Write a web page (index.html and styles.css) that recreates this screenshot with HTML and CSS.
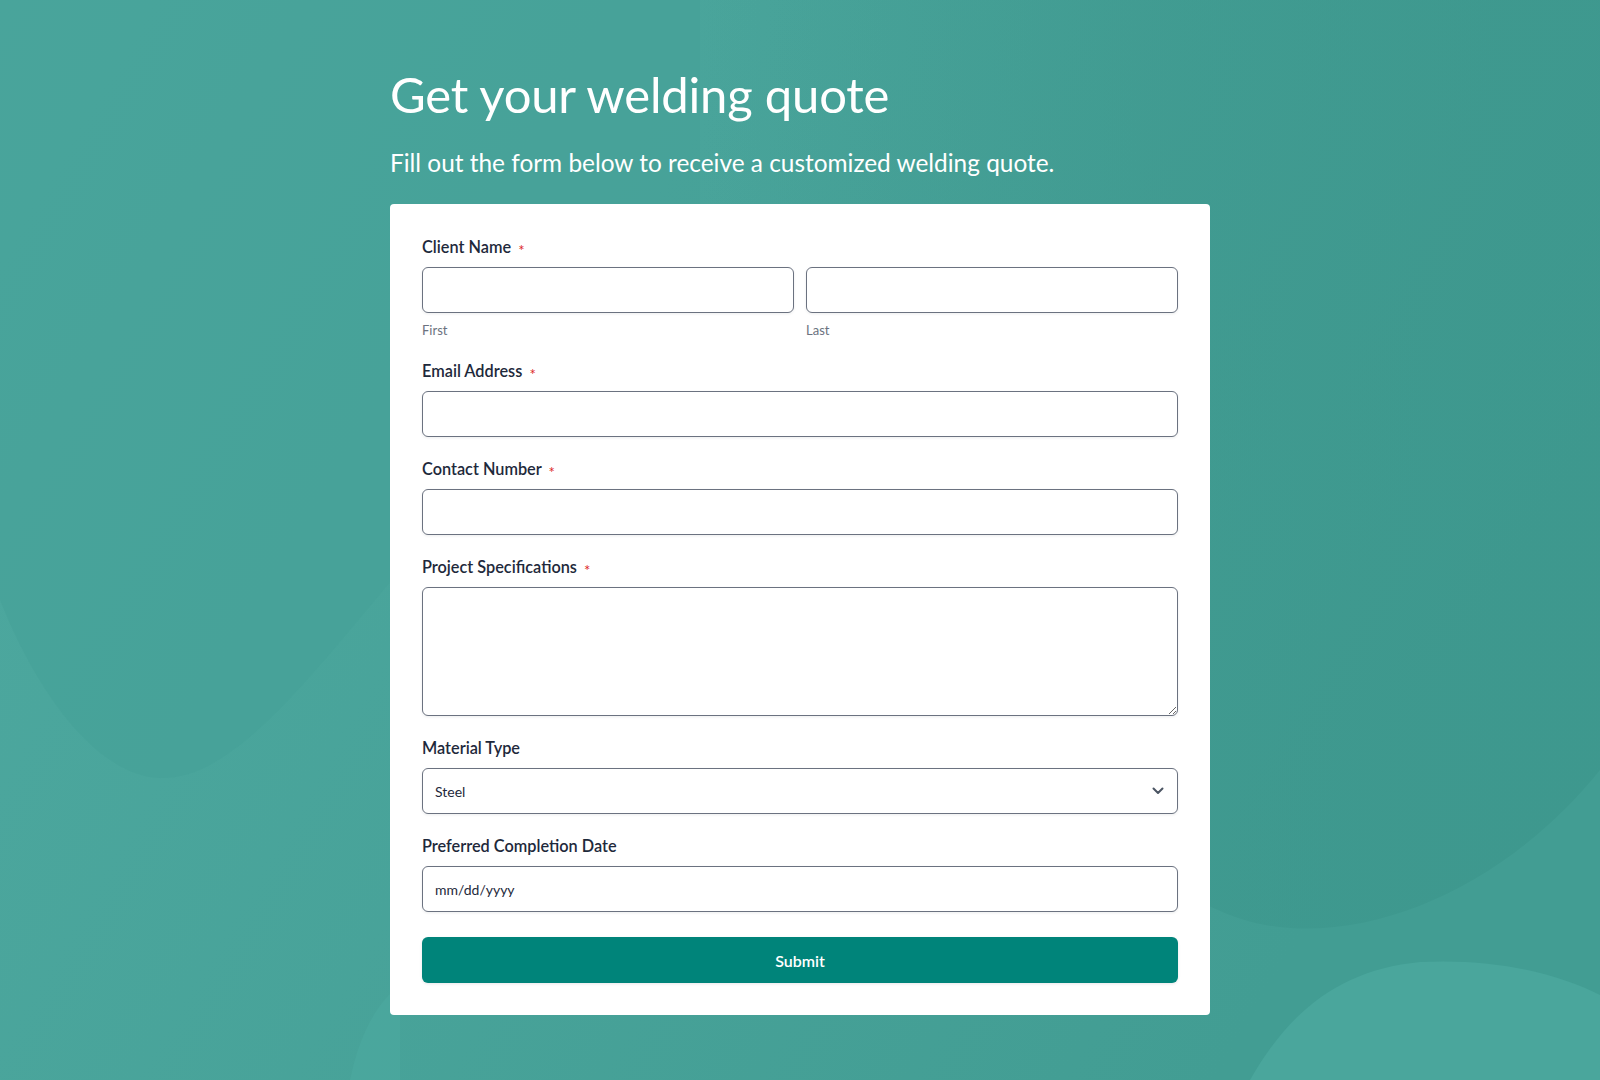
FILE: index.html
```html
<!DOCTYPE html>
<html lang="en">
<head>
<meta charset="utf-8">
<title>Get your welding quote</title>
<link rel="stylesheet" href="styles.css">
</head>
<body>
<svg class="bg" viewBox="0 0 1600 1080" preserveAspectRatio="none" aria-hidden="true">
  <defs>
    <linearGradient id="g" x1="0" y1="0" x2="1" y2="0.4">
      <stop offset="0" stop-color="#4ea9a0"/>
      <stop offset="1" stop-color="#429d93"/>
    </linearGradient>
    <linearGradient id="r" gradientUnits="userSpaceOnUse" x1="700" y1="0" x2="1500" y2="0">
      <stop offset="0" stop-color="#3c968c" stop-opacity="0"/>
      <stop offset="0.6" stop-color="#3c968c" stop-opacity="0.55"/>
      <stop offset="1" stop-color="#3c968c" stop-opacity="0.7"/>
    </linearGradient>
  </defs>
  <rect width="1600" height="1080" fill="url(#g)"/>
  <path d="M0,0 L0,600 C40,700 100,776 160,778 C230,780 300,690 400,570 L700,300 L700,0 Z" fill="#45a097" opacity="0.55"/>
  <path d="M700,0 L1600,0 L1600,770 C1520,870 1400,935 1290,928 C1240,925 1200,905 1150,870 L700,600 Z" fill="url(#r)"/>
  <path d="M350,1080 C360,1030 380,1000 400,985 L400,1080 Z" fill="#4ca89e" opacity="0.7"/>
  <path d="M1250,1080 C1290,1010 1340,970 1420,962 C1500,958 1560,975 1600,995 L1600,1080 Z" fill="#4aa69c"/>
</svg>
<main class="page">
  <h1 class="title">Get your welding quote</h1>
  <p class="subtitle">Fill out the form below to receive a customized welding quote.</p>
  <form class="card">
    <div class="group">
      <label class="label">Client Name <span class="req">*</span></label>
      <div class="split">
        <div class="col">
          <input class="input" type="text">
          <span class="sub">First</span>
        </div>
        <div class="col">
          <input class="input" type="text">
          <span class="sub">Last</span>
        </div>
      </div>
    </div>
    <div class="group">
      <label class="label">Email Address <span class="req">*</span></label>
      <input class="input" type="text">
    </div>
    <div class="group">
      <label class="label">Contact Number <span class="req">*</span></label>
      <input class="input" type="text">
    </div>
    <div class="group">
      <label class="label">Project Specifications <span class="req">*</span></label>
      <textarea class="input area"></textarea>
    </div>
    <div class="group">
      <label class="label">Material Type</label>
      <div class="select">
        <span>Steel</span>
        <svg class="chev" viewBox="0 0 12 8" width="12" height="8"><path d="M1.5 1.5 L6 6 L10.5 1.5" fill="none" stroke="#4b5563" stroke-width="2" stroke-linecap="round" stroke-linejoin="round"/></svg>
      </div>
    </div>
    <div class="group">
      <label class="label">Preferred Completion Date</label>
      <input class="input date" type="text" placeholder="mm/dd/yyyy">
    </div>
    <button class="submit" type="button">Submit</button>
  </form>
</main>
</body>
</html>
```
FILE: styles.css
```css
* { box-sizing: border-box; }
html, body { margin: 0; padding: 0; }
body {
  width: 1600px;
  height: 1080px;
  overflow: hidden;
  position: relative;
  font-family: Lato, "Noto Sans", sans-serif;
  color: #1e293b;
}
.bg {
  position: absolute;
  inset: 0;
  width: 1600px;
  height: 1080px;
  z-index: 0;
}
.page {
  position: relative;
  z-index: 1;
  width: 820px;
  margin: 0 auto 0 390px;
  padding-top: 62px;
}
.title {
  margin: 0;
  font-weight: 400;
  font-size: 49px;
  line-height: 64px;
  color: #ffffff;
  letter-spacing: -0.2px;
}
.subtitle {
  margin: 21px 0 0;
  font-size: 24.4px;
  line-height: 32px;
  color: #ffffff;
}
.card {
  margin-top: 25px;
  background: #ffffff;
  border-radius: 4px;
  padding: 31px 32px 32px;
  display: flex;
  flex-direction: column;
  gap: 20px;
}
.group {
  display: flex;
  flex-direction: column;
}
.label {
  font-size: 16.3px;
  line-height: 24px;
  font-weight: 600;
  color: #1e293b;
  margin-bottom: 8px;
}
.req {
  color: #dc2626;
  font-size: 15px;
  font-weight: 400;
  margin-left: 3px;
  position: relative;
  top: 3px;
}
.split {
  display: flex;
  gap: 12px;
}
.col {
  flex: 1;
  display: flex;
  flex-direction: column;
}
.sub {
  margin-top: 8px;
  font-size: 13px;
  line-height: 18px;
  color: #6b7280;
}
.input {
  display: block;
  width: 100%;
  height: 46px;
  border: 1px solid #6b7280;
  border-radius: 6px;
  background: #ffffff;
  box-shadow: 0 1px 3px rgba(15, 23, 42, 0.08);
  font-family: Lato, "Noto Sans", sans-serif;
  font-size: 14px;
  padding: 0 12px;
  color: #1e293b;
  outline: none;
}
.area {
  height: 129px;
  resize: vertical;
  padding: 10px 12px;
}
.date::placeholder {
  color: #1e293b;
  opacity: 1;
}
.select {
  height: 46px;
  border: 1px solid #6b7280;
  border-radius: 6px;
  box-shadow: 0 1px 3px rgba(15, 23, 42, 0.08);
  display: flex;
  align-items: center;
  justify-content: space-between;
  padding: 0 13px 0 12px;
  font-size: 14px;
  color: #1e293b;
}
.chev { display: block; }
.submit {
  margin-top: 5px;
  height: 46px;
  border: none;
  border-radius: 6px;
  background: #00847a;
  color: #ffffff;
  font-family: Lato, "Noto Sans", sans-serif;
  font-size: 16px;
  font-weight: 600;
  box-shadow: 0 1px 3px rgba(15, 23, 42, 0.1);
  cursor: pointer;
}
```
